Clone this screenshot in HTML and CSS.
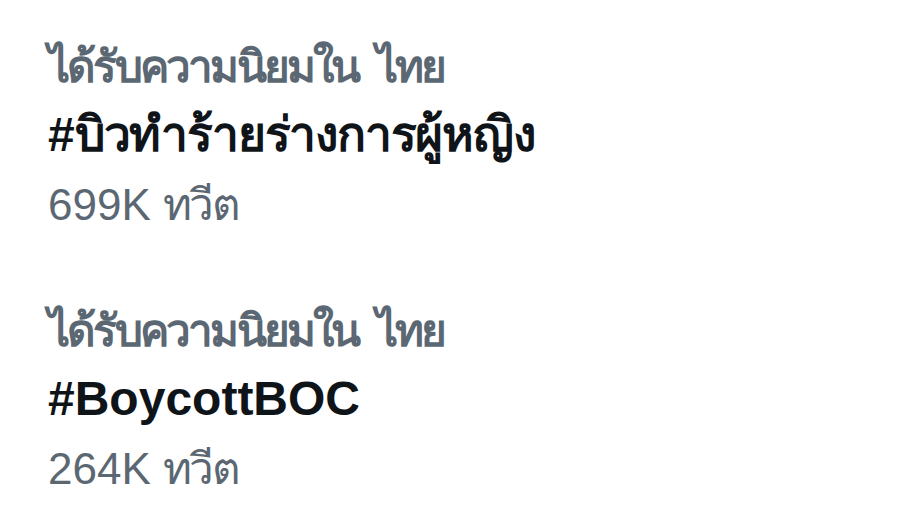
FILE: index.html
```html
<!DOCTYPE html>
<html lang="th">
<head>
    <meta charset="UTF-8">
    <meta name="viewport" content="width=device-width, initial-scale=1.0">
    <title>กำลังเป็นกระแส</title>
    <link rel="stylesheet" href="styles.css">
</head>
<body>
    <div class="trends">
        <div class="trend">
            <div class="trend-context"><span class="th">ได้รับความนิยมใน ไทย</span></div>
            <div class="trend-name">#<span class="th">บิวทำร้ายร่างการผู้หญิง</span></div>
            <div class="trend-count">699K <span class="th">ทวีต</span></div>
        </div>
        <div class="trend">
            <div class="trend-context"><span class="th">ได้รับความนิยมใน ไทย</span></div>
            <div class="trend-name">#BoycottBOC</div>
            <div class="trend-count">264K <span class="th">ทวีต</span></div>
        </div>
    </div>
</body>
</html>
```

FILE: styles.css
```css
body {
    margin: 0;
    padding: 0;
    background-color: #ffffff;
    font-family: "Liberation Sans", "Noto Sans", sans-serif;
}

.trends {
    padding: 34px 48px 0;
}

.trend {
    margin-bottom: 58px;
}

.trend:last-child {
    margin-bottom: 0;
}

.trend-context {
    color: #5b6772;
    font-size: 44px;
    font-weight: bold;
    line-height: 66px;
}

/* thai glyphs run wide, pull them in a little */
.trend-context .th {
    letter-spacing: -2.8px;
    word-spacing: 8px;
}

.trend-name {
    color: #0f1419;
    font-size: 48px;
    font-weight: bold;
    line-height: 70px;
}

.trend-name .th {
    letter-spacing: -1.2px;
}

.trend-count {
    color: #5b6772;
    font-size: 44px;
    line-height: 70px;
}

.trend-count .th {
    letter-spacing: -2.5px;
}
```
